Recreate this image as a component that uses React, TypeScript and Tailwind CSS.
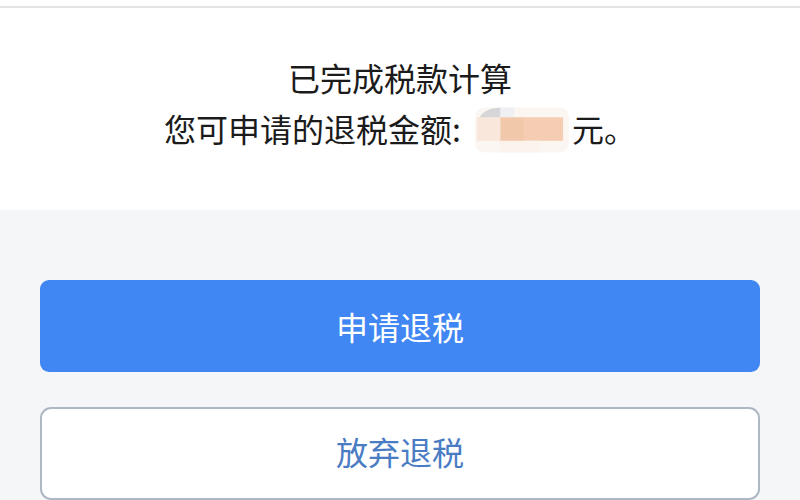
import React from "react";

const font = { fontFamily: '"Noto Sans CJK SC", "Noto Sans", sans-serif' };

function Mosaic() {
  // blurred / pixelated amount
  return (
    <svg width="94" height="50" viewBox="0 0 96 50" className="inline-block ml-[14px] mr-[3px] mt-[4px]">
      <rect x="0" y="2" width="96" height="46" rx="10" fill="#fbf6f2" />
      <rect x="2" y="12" width="26" height="24" fill="#f8e7da" />
      <path d="M4 14 Q8 3 26 2 L26 12 L4 12 Z" fill="#d6d6d8" />
      <rect x="26" y="2" width="14" height="10" fill="#eef0f4" />
      <rect x="26" y="12" width="24" height="26" fill="#f2c8aa" />
      <rect x="50" y="12" width="40" height="24" fill="#f4cdb2" />
      <rect x="26" y="36" width="40" height="12" fill="#fcf3ec" />
    </svg>
  );
}

export default function App() {
  return (
    <div className="w-[800px] h-[500px] overflow-hidden flex flex-col bg-[#f5f6f8]" style={font}>
      {/* top strip */}
      <div className="h-[8px] bg-white border-b-2 border-[#e4e4e4]" />

      {/* result */}
      <div className="h-[202px] bg-white flex flex-col items-center pt-[45px] text-[32px] leading-[48px] text-[#1b1b1b]">
        <p>已完成税款计算</p>
        <p className="flex items-center">
          您可申请的退税金额:
          <Mosaic />
          元。
        </p>
      </div>

      {/* actions */}
      <div className="flex flex-col gap-[35px] px-[40px] pt-[70px]">
        <button className="h-[92px] w-full rounded-[9px] bg-[#4087f3] text-white text-[32px]">
          申请退税
        </button>
        <button className="h-[93px] w-full rounded-[11px] bg-white border-2 border-[#aeb8c4] text-[#4a7cc4] text-[32px] pb-[6px]">
          放弃退税
        </button>
      </div>
    </div>
  );
}
